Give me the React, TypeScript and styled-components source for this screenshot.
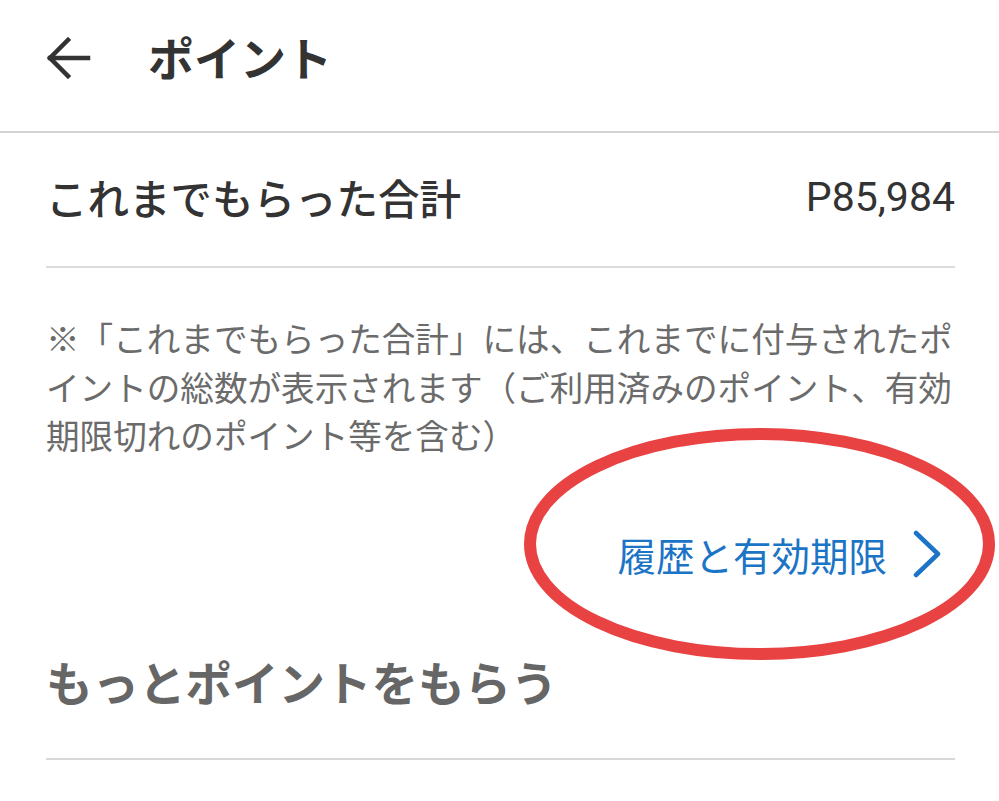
import React from "react";
import styled, {createGlobalStyle} from "styled-components";

const GlobalStyle = createGlobalStyle`
body {
    margin: 0;
    background: #fff;
    font-family: "Noto Sans CJK JP", "Noto Sans", sans-serif;
}
`
const Page = styled.div`
    width: 999px;
    height: 801px;
    overflow: hidden;
    background: #fff;
`
const Header = styled.header`
    display: flex;
    align-items: center;
    border-bottom: 2px solid #d4d4d4;
    padding-left: 44px;
    box-sizing: border-box;
    height: 133px;
`
const BackButton = styled.button`
    width: 48px;
    height: 48px;
    padding: 0;
    border: none;
    background: none;
    display: flex;
    align-items: center;
    justify-content: center;
    margin-top: -16px;
`
const Title = styled.h1`
    margin: -20px 0 0 56px;
    font-size: 46px;
    font-weight: 700;
    color: #333;
`
const Content = styled.main`
    padding: 0 44px 0 46px;
`
const TotalRow = styled.div`
    height: 135px;
    display: flex;
    align-items: center;
    justify-content: space-between;
    border-bottom: 2px solid #dcdcdc;
    padding-bottom: 6px;
    box-sizing: border-box;
`
const RowLabel = styled.span`
    font-size: 41.5px;
    font-weight: 500;
    color: #333;
`
const RowValue = styled.span`
    font-family: Roboto, "Noto Sans", sans-serif;
    font-size: 41px;
    color: #333;
`
const Note = styled.p`
    margin: 46px 0 0;
    font-size: 33.6px;
    line-height: 48.5px;
    color: #6b6b6b;
`
const LinkRow = styled.div`
    position: relative;
    height: 60px;
    margin-top: 64px;
    display: flex;
    align-items: center;
    justify-content: flex-end;
    padding-right: 14px;
`
const HistoryLink = styled.a`
    display: flex;
    align-items: center;
    gap: 24px;
    font-size: 38.5px;
    color: #1b74c5;
    text-decoration: none;
`
const Circle = styled.svg`
    position: absolute;
    left: 478px;
    top: -96px;
    pointer-events: none;
`
const SectionTitle = styled.h2`
    margin: 67px 0 0;
    padding-bottom: 47px;
    font-size: 46.5px;
    line-height: 60px;
    font-weight: 700;
    color: #666;
    border-bottom: 2px solid #d8d8d8;
`

const ArrowLeft = () => (
    <svg width="48" height="48" viewBox="0 0 48 48" fill="none" stroke="#333" strokeWidth="4.5"
         strokeLinecap="square">
        <path d="M44 24H6"/>
        <path d="M24 6L6 24l18 18"/>
    </svg>
)

const Chevron = () => (
    <svg width="30" height="48" viewBox="0 0 30 48" fill="none" stroke="#1b74c5" strokeWidth="4.5"
         strokeLinecap="round" strokeLinejoin="round">
        <path d="M5 3l22 21L5 45"/>
    </svg>
)

const App = () => {
    return (<Page>
        <GlobalStyle/>
        <Header>
            <BackButton aria-label="戻る"><ArrowLeft/></BackButton>
            <Title>ポイント</Title>
        </Header>
        <Content>
            <TotalRow>
                <RowLabel>これまでもらった合計</RowLabel>
                <RowValue>P85,984</RowValue>
            </TotalRow>
            <Note>
                ※「これまでもらった合計」には、これまでに付与されたポイントの総数が表示されます（ご利用済みのポイント、有効期限切れのポイント等を含む）
            </Note>
            <LinkRow>
                <HistoryLink href="#">履歴と有効期限<Chevron/></HistoryLink>
                <Circle width="471" height="232" viewBox="0 0 471 232">
                    <ellipse cx="235.5" cy="116" rx="229.5" ry="110" fill="none" stroke="#e84242"
                             strokeWidth="12"/>
                </Circle>
            </LinkRow>
            <SectionTitle>もっとポイントをもらう</SectionTitle>
        </Content>
    </Page>)
}

export default App
